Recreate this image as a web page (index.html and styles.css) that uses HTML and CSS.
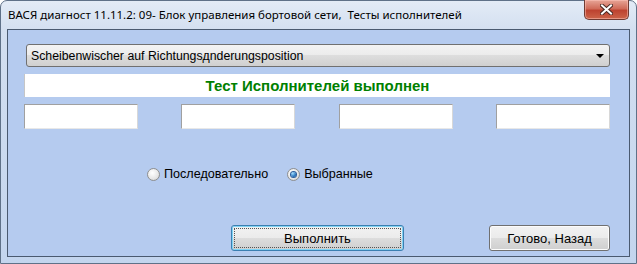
FILE: index.html
```html
<!DOCTYPE html>
<html lang="ru">
<head>
    <meta charset="UTF-8">
    <title>ВАСЯ диагност</title>
    <link rel="stylesheet" href="styles.css">
</head>
<body>
    <div class="window">
        <div class="titlebar">
            <span class="title">ВАСЯ диагност 11.11.2: 09- Блок управления бортовой сети,&nbsp; Тесты исполнителей</span>
            <button class="close-button" aria-label="Закрыть">
                <svg width="13" height="11" viewBox="0 0 13 11">
                    <path d="M2 1.5 L11 9.5 M11 1.5 L2 9.5" stroke="#4a2a24" stroke-width="4" stroke-linecap="square"/>
                    <path d="M2 1.5 L11 9.5 M11 1.5 L2 9.5" stroke="#ffffff" stroke-width="2" stroke-linecap="square"/>
                </svg>
            </button>
        </div>
        <div class="client">
            <div class="combo">
                <span class="combo-text">Scheibenwischer auf Richtungsдnderungsposition</span>
                <span class="combo-arrow"></span>
            </div>
            <div class="status">Тест Исполнителей выполнен</div>
            <div class="fields">
                <div class="field"></div>
                <div class="field"></div>
                <div class="field"></div>
                <div class="field"></div>
            </div>
            <div class="radios">
                <label class="radio"><span class="radio-dot"></span>Последовательно</label>
                <label class="radio checked"><span class="radio-dot"></span>Выбранные</label>
            </div>
            <div class="buttons">
                <button class="btn btn-default"><span class="focus-rect">Выполнить</span></button>
                <button class="btn btn-back">Готово, Назад</button>
            </div>
        </div>
    </div>
</body>
</html>
```

FILE: styles.css
```css
body, html {
    margin: 0;
    background: #ffffff;
}
.window {
    width: 637px;
    height: 264px;
    box-sizing: border-box;
    display: flex;
    flex-direction: column;
    padding: 0 6px 6px 6px;
    border: 1px solid #5f7188;
    border-radius: 7px 7px 0 0;
    background: linear-gradient(#e3ebf6, #d3dff0 30px, #c3d5ee);
}
.titlebar {
    height: 28px;
    display: flex;
    align-items: flex-start;
}
.title {
    padding: 6px 0 0 1px;
    font-family: "Noto Sans", "Open Sans", sans-serif;
    font-size: 11.5px;
    color: #000000;
    white-space: nowrap;
}
.close-button {
    margin: -1px 1px 0 auto;
    width: 45px;
    height: 20px;
    padding: 0;
    display: flex;
    align-items: center;
    justify-content: center;
    border: 1px solid #6f3b33;
    border-top: none;
    border-radius: 0 0 5px 5px;
    background: linear-gradient(#e7a597, #d06c5a 45%, #bd4330 55%, #cc6449);
    box-shadow: inset 0 0 0 1px rgba(255, 200, 190, 0.5);
}
.client {
    flex-grow: 1;
    box-sizing: border-box;
    border: 1px solid #4a5a70;
    background: #b5cbef;
    padding: 14px 19px 0 16px;
    font-family: "Liberation Sans", Arial, sans-serif;
    font-size: 12.6px;
    color: #000000;
}
.combo {
    margin-left: 2px;
    height: 23px;
    box-sizing: border-box;
    display: flex;
    align-items: center;
    justify-content: space-between;
    padding: 0 3px 0 4px;
    border: 1px solid #707070;
    border-radius: 3px;
    background: linear-gradient(#f3f3f3, #ebebeb 50%, #dddddd 50%, #d0d0d0);
    font-size: 12.3px;
}
.combo-arrow {
    width: 0;
    height: 0;
    border-left: 4px solid transparent;
    border-right: 4px solid transparent;
    border-top: 4px solid #000000;
    margin-right: 2px;
}
.status {
    margin-top: 7px;
    height: 23px;
    box-sizing: border-box;
    background: #ffffff;
    border-left: 1px solid #c6c6c6;
    text-align: center;
    line-height: 23px;
    font-weight: bold;
    font-size: 15px;
    color: #008000;
}
.fields {
    margin-top: 7px;
    display: flex;
    justify-content: space-between;
}
.field {
    width: 114px;
    height: 25px;
    box-sizing: border-box;
    background: #ffffff;
    border: 1px solid #a0a0a0;
    border-right-color: #d8d8d8;
    border-bottom-color: #e8e8e8;
}
.radios {
    margin: 37px 0 0 123px;
    display: flex;
    gap: 19px;
    height: 16px;
    align-items: center;
}
.radio {
    display: flex;
    align-items: center;
    gap: 4px;
}
.radio-dot {
    width: 13px;
    height: 13px;
    box-sizing: border-box;
    border-radius: 50%;
    border: 1px solid #8e8f8f;
    background: radial-gradient(circle at 40% 35%, #ffffff, #e6e6e6 60%, #c8c8c8);
    display: flex;
    align-items: center;
    justify-content: center;
}
.checked .radio-dot::after {
    content: "";
    width: 5px;
    height: 5px;
    border-radius: 50%;
    background: radial-gradient(circle at 35% 30%, #9fdcff, #1a67b4 70%, #0d3f86);
    box-shadow: 0 0 0 1px #2b5d9c;
}
.buttons {
    margin-top: 43px;
    display: flex;
    justify-content: flex-end;
    gap: 85px;
}
.btn {
    height: 26px;
    box-sizing: border-box;
    padding: 0;
    border: 1px solid #707070;
    border-radius: 3px;
    background: linear-gradient(#f2f2f2, #ebebeb 50%, #dddddd 50%, #cfcfcf);
    box-shadow: inset 0 0 0 1px #fcfcfc;
    font-family: "Liberation Sans", Arial, sans-serif;
    font-size: 13px;
    color: #000000;
}
.btn-default {
    width: 173px;
    border-color: #3c7fb1;
    box-shadow: inset 0 0 0 1px #7fd3f5;
    display: flex;
    padding: 2px;
}
.focus-rect {
    flex-grow: 1;
    display: flex;
    align-items: center;
    justify-content: center;
    border: 1px dotted #555555;
}
.btn-back {
    width: 121px;
}
```
